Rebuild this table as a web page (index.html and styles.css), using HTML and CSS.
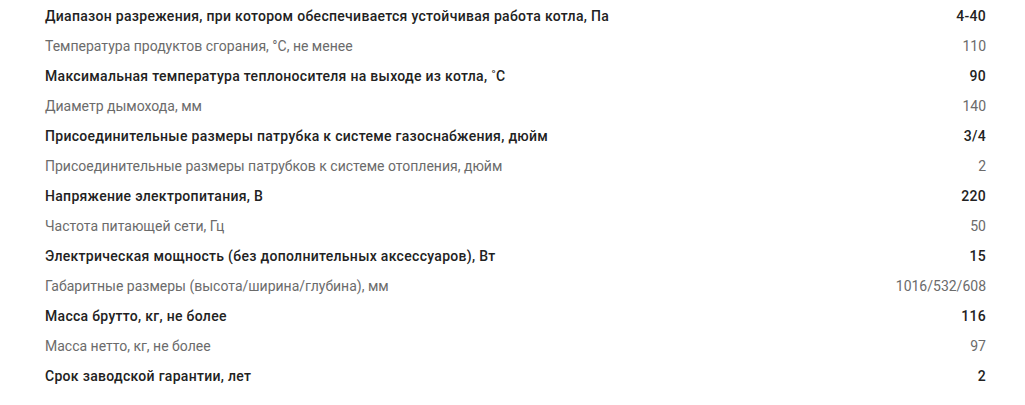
FILE: index.html
```html
<!DOCTYPE html>
<html lang="ru">
<head>
<meta charset="utf-8">
<link rel="stylesheet" href="styles.css">
</head>
<body>
<div class="specs">
  <div class="row strong"><span class="name">Диапазон разрежения, при котором обеспечивается устойчивая работа котла, Па</span><span class="val">4-40</span></div>
  <div class="row"><span class="name">Температура продуктов сгорания, °С, не менее</span><span class="val">110</span></div>
  <div class="row strong"><span class="name">Максимальная температура теплоносителя на выходе из котла, ˚С</span><span class="val">90</span></div>
  <div class="row"><span class="name">Диаметр дымохода, мм</span><span class="val">140</span></div>
  <div class="row strong"><span class="name">Присоединительные размеры патрубка к системе газоснабжения, дюйм</span><span class="val">3/4</span></div>
  <div class="row"><span class="name">Присоединительные размеры патрубков к системе отопления, дюйм</span><span class="val">2</span></div>
  <div class="row strong"><span class="name">Напряжение электропитания, В</span><span class="val">220</span></div>
  <div class="row"><span class="name">Частота питающей сети, Гц</span><span class="val">50</span></div>
  <div class="row strong"><span class="name">Электрическая мощность (без дополнительных аксессуаров), Вт</span><span class="val">15</span></div>
  <div class="row"><span class="name">Габаритные размеры (высота/ширина/глубина), мм</span><span class="val">1016/532/608</span></div>
  <div class="row strong"><span class="name">Масса брутто, кг, не более</span><span class="val">116</span></div>
  <div class="row"><span class="name">Масса нетто, кг, не более</span><span class="val">97</span></div>
  <div class="row strong"><span class="name">Срок заводской гарантии, лет</span><span class="val">2</span></div>
</div>
</body>
</html>
```
FILE: styles.css
```css
html, body {
  margin: 0;
  padding: 0;
  background: #fff;
}
.specs {
  display: flex;
  flex-direction: column;
  padding: 1px 39px 0 45px;
  font-family: Roboto, "Noto Sans", sans-serif;
}
.row {
  display: flex;
  justify-content: space-between;
  align-items: center;
  height: 30px;
  font-size: 14px;
  color: #6b6b6b;
}
.row.strong {
  font-weight: 500;
  letter-spacing: 0.3px;
  color: #222;
}
```
